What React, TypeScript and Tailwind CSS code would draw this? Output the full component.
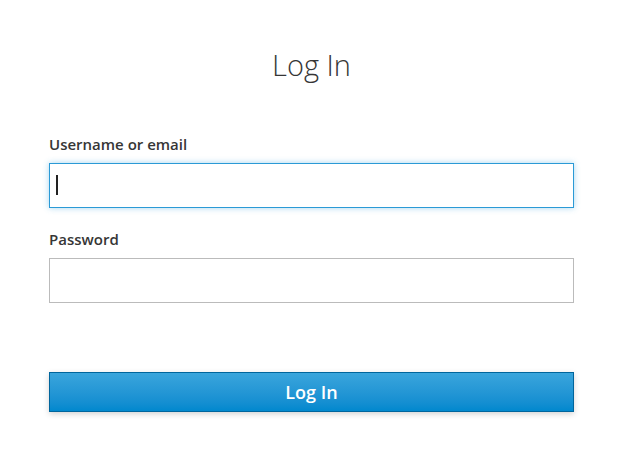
import React from 'react';

const font = { fontFamily: '"Open Sans", "Noto Sans", sans-serif' };

export default function App() {
  return (
    <div className="min-h-screen w-full bg-white" style={font}>
      <div className="w-[525px] ml-[49px] flex flex-col">
        {/* Title */}
        <h1 className="mt-[45px] h-[40px] text-center text-[29px] leading-[40px] font-light text-[#363636]">
          Log In
        </h1>

        {/* Username */}
        <label className="mt-[49px] text-[15px] leading-[20px] font-semibold text-[#363636]">
          Username or email
        </label>
        <div className="relative mt-[9px]">
          <input
            type="text"
            className="block w-full h-[45px] border border-[#2b9ad6] bg-white px-[7px] text-[14px] outline-none shadow-[0_0_6px_rgba(57,165,220,0.45)]"
          />
          {/* caret */}
          <span className="absolute left-[7px] top-[12px] h-[20px] w-[2px] bg-[#222]" />
        </div>

        {/* Password */}
        <label className="mt-[21px] text-[15px] leading-[20px] font-semibold text-[#363636]">
          Password
        </label>
        <input
          type="password"
          className="mt-[9px] block w-full h-[45px] border border-[#bbbbbb] bg-white px-[7px] text-[14px] outline-none"
        />

        {/* Submit */}
        <button
          type="button"
          className="mt-[69px] h-[40px] w-full border border-[#00659c] bg-gradient-to-b from-[#39a5dc] to-[#0088ce] text-white text-[18px] font-semibold shadow-[0_2px_6px_rgba(0,0,0,0.18)]"
        >
          Log In
        </button>
      </div>
    </div>
  );
}
